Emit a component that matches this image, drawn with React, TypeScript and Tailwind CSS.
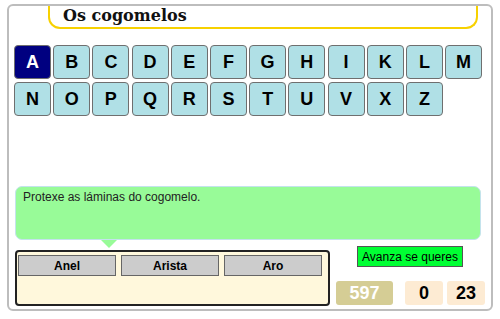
const letters1 = ["A", "B", "C", "D", "E", "F", "G", "H", "I", "K", "L", "M"];
const letters2 = ["N", "O", "P", "Q", "R", "S", "T", "U", "V", "X", "Z"];
const answers = ["Anel", "Arista", "Aro"];

function LetterKey({ l, active }: { l: string; active?: boolean }) {
  return (
    <div
      className={`w-[37px] h-[34px] rounded-[4px] border border-[#6f6f6f] flex items-center justify-center text-[18px] font-bold ${
        active ? "bg-[#000080] text-white" : "bg-[#b0e0e6] text-black"
      }`}
    >
      {l}
    </div>
  );
}

export default function App() {
  return (
    <div className="w-[500px] h-[319px] bg-white pt-[4px] pl-[7px] font-['Liberation_Sans',Arial,sans-serif]">
      <div className="w-[486px] h-[307px] border-2 border-[#bdbdbd] rounded-[6px] bg-white">
        {/* title */}
        <div className="ml-[39px] w-[430px] h-[23px] border-2 border-t-0 border-[#f7d100] rounded-b-[12px] pl-[13px] leading-[20px] text-[16px] font-bold text-[#111] font-['DejaVu_Serif',serif]">
          Os cogomelos
        </div>

        {/* alphabet */}
        <div className="ml-[5px] mt-[16px] flex flex-col gap-[3px]">
          <div className="flex gap-[2.2px]">
            {letters1.map((l) => (
              <LetterKey key={l} l={l} active={l === "A"} />
            ))}
          </div>
          <div className="flex gap-[2.2px]">
            {letters2.map((l) => (
              <LetterKey key={l} l={l} />
            ))}
          </div>
        </div>

        {/* clue */}
        <div className="relative ml-[6px] mt-[70px] w-[466px] h-[54px] bg-[#98fb98] border border-[#c4e3ec] rounded-[7px] pl-[7px] pt-[1px] text-[12px] text-[#222]">
          Protexe as láminas do cogomelo.
          <div className="absolute left-[85px] top-[53px] w-0 h-0 border-l-[8px] border-r-[8px] border-t-[8px] border-l-transparent border-r-transparent border-t-[#98fb98]" />
        </div>

        {/* bottom */}
        <div className="flex">
          <div className="ml-[6px] mt-[10px] w-[315px] h-[56px] border-2 border-[#222] rounded-[4px] bg-[#fff8dc] pl-[1px] pt-[3px] flex items-start gap-[5px]">
            {answers.map((a) => (
              <div
                key={a}
                className="w-[98px] h-[21px] bg-[#cccccc] border border-[#666] flex items-center justify-center text-[12px] font-bold text-black"
              >
                {a}
              </div>
            ))}
          </div>
          <div className="flex flex-col">
            <div className="ml-[27px] mt-[6px] w-[106px] h-[21px] bg-[#00ff33] border border-[#555] flex items-center justify-center text-[12px] text-black">
              Avanza se queres
            </div>
            <div className="ml-[6px] mt-[14px] flex">
              <div className="w-[57px] h-[24px] rounded-[3px] bg-[#d5cd95] text-white text-[18px] font-bold flex items-center justify-center">
                597
              </div>
              <div className="ml-[12px] w-[38px] h-[24px] rounded-[3px] bg-[#fdebd3] text-black text-[18px] font-bold flex items-center justify-center">
                0
              </div>
              <div className="ml-[4px] w-[38px] h-[24px] rounded-[3px] bg-[#fdebd3] text-black text-[18px] font-bold flex items-center justify-center">
                23
              </div>
            </div>
          </div>
        </div>
      </div>
    </div>
  );
}
